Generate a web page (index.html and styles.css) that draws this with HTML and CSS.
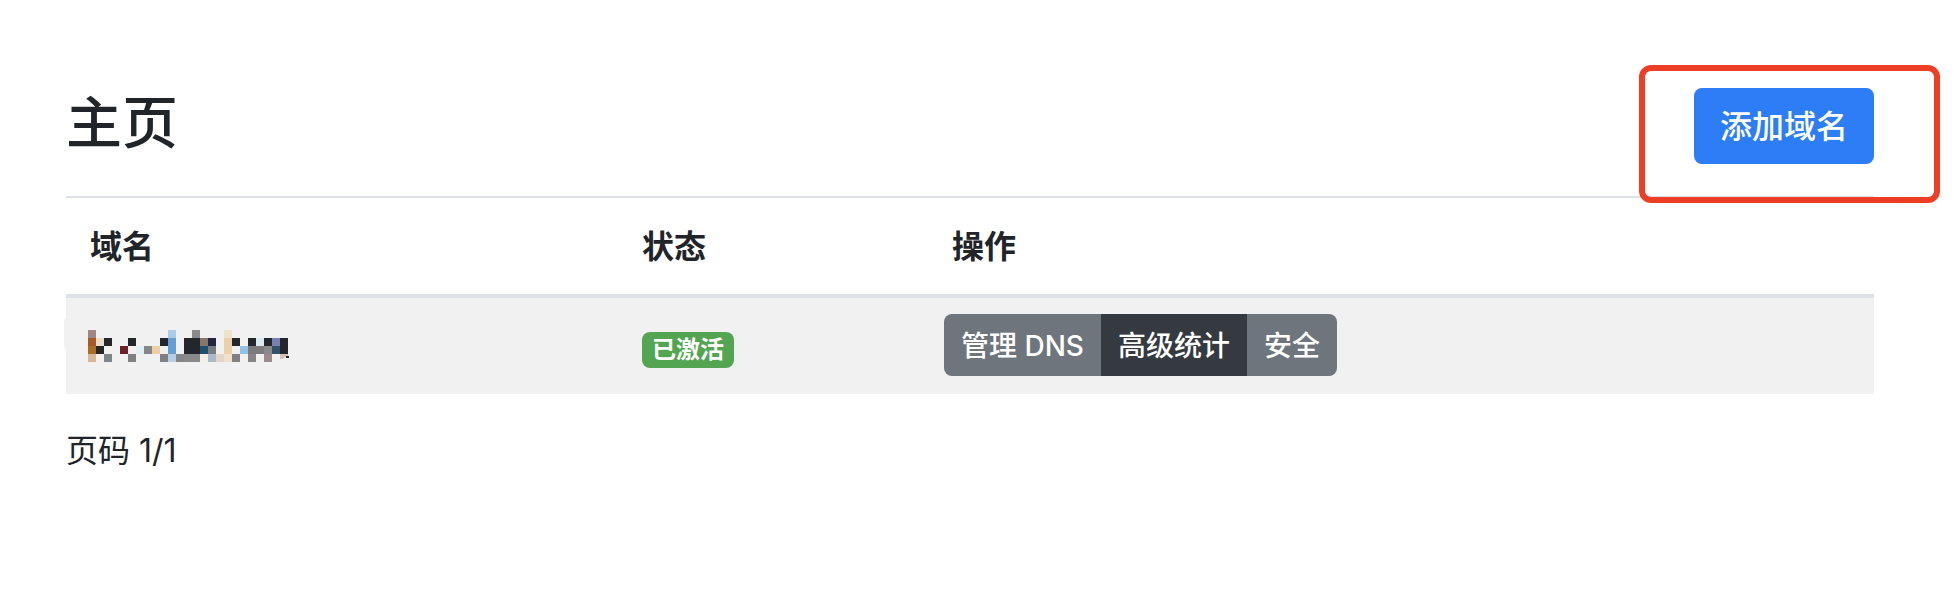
FILE: index.html
```html
<!DOCTYPE html>
<html lang="zh-CN">
<head>
<meta charset="utf-8">
<title>主页</title>
<meta name="viewport" content="width=device-width, initial-scale=1">
<link rel="stylesheet" href="styles.css">
</head>
<body>
<main class="page">
  <header class="page-header">
    <h1 class="title">主页</h1>
    <div class="highlight"><button type="button" class="btn btn-primary">添加域名</button></div>
  </header>
  <table class="domains">
    <thead>
      <tr><th scope="col" class="col-name">域名</th><th scope="col" class="col-status">状态</th><th scope="col">操作</th></tr>
    </thead>
    <tbody>
      <tr>
        <td class="name">
          <svg class="mosaic" viewBox="0 0 25 4" width="200" height="32" shape-rendering="crispEdges" role="img" aria-label="域名已隐藏">
            <g fill="#23272b">
              <path d="M2 1h1v1h-1zM5 1h1v1h-1zM9 1h1v1h-1zM12 1h2v2h-2zM18 1h1v1h-1zM20 1h1v1h-1zM22 1h1v1h-1zM24 1h1v2h-1zM1 2h1v1h-1z"/>
            </g>
            <path fill="#9f8583" d="M0 0h1v1h-1z"/>
            <path fill="#abcce6" d="M10 0h1v1h-1z"/>
            <path fill="#8a8a8a" d="M13 0h1v1h-1zM22 2h1v1h-1zM12 3h2v1h-2z"/>
            <path fill="#f0e1cd" d="M17 0h1v1h-1zM17 3h1v1h-1z"/>
            <path fill="#a65a28" d="M0 1h1v1h-1z"/>
            <path fill="#e8dccd" d="M1 1h1v1h-1z"/>
            <path fill="#639fd4" d="M10 1h1v2h-1z"/>
            <path fill="#867868" d="M14 1h1v1h-1z"/>
            <path fill="#242444" d="M15 1h1v1h-1z"/>
            <path fill="#ecd0a6" d="M17 1h1v2h-1zM8 2h1v1h-1z"/>
            <path fill="#d9eaf2" d="M21 1h1v1h-1z"/>
            <path fill="#7880b4" d="M23 1h1v1h-1z"/>
            <path fill="#ab6c26" d="M0 2h1v1h-1z"/>
            <path fill="#6c2227" d="M4 2h1v1h-1z"/>
            <path fill="#e0f0f2" d="M6 2h1v1h-1z"/>
            <path fill="#868688" d="M7 2h1v1h-1zM11 3h1v1h-1zM20 3h1v1h-1z"/>
            <path fill="#1f4e6e" d="M14 2h1v1h-1z"/>
            <path fill="#7b7b7d" d="M15 2h1v1h-1zM20 2h2v1h-2z"/>
            <path fill="#92c3e6" d="M19 2h1v1h-1z"/>
            <path fill="#34516a" d="M23 2h1v1h-1z"/>
            <path fill="#d8b89c" d="M0 3h1v1h-1z"/>
            <path fill="#7e868b" d="M2 3h1v1h-1z"/>
            <path fill="#808083" d="M5 3h1v1h-1zM9 3h1v1h-1zM18 3h1v1h-1z"/>
            <path fill="#b6cfe4" d="M10 3h1v1h-1z"/>
            <path fill="#f2efe8" d="M14 3h1v1h-1z"/>
            <path fill="#abb9cc" d="M15 3h1v1h-1z"/>
            <path fill="#e3d5c4" d="M16 3h1v1h-1z"/>
            <path fill="#9c8a8c" d="M22 3h1v1h-1z"/>
            <path fill="#d3c3bb" d="M24 3h1v.3l-1 .4z"/>
            <path fill="#23272b" d="M24.7 3.25h.4v.2h-.4z"/>
          </svg>
        </td>
        <td><span class="badge">已激活</span></td>
        <td class="actions">
          <div class="btn-group" role="group" aria-label="操作">
            <button type="button" class="btn btn-sm">管理 DNS</button>
            <button type="button" class="btn btn-sm btn-dark">高级统计</button>
            <button type="button" class="btn btn-sm">安全</button>
          </div>
        </td>
      </tr>
    </tbody>
  </table>
  <p class="pager">页码 1/1</p>
</main>
</body>
</html>
```
FILE: styles.css
```css
* { box-sizing: border-box; }

body {
  margin: 0;
  background: #fff;
  color: #212529;
  font: 32px/48px Inter, "Noto Sans CJK SC", sans-serif;
}

.page { padding: 88px 80px 0 66px; }

.page-header {
  display: flex;
  justify-content: space-between;
  align-items: flex-start;
  margin-bottom: 32px;
}

.title {
  margin: 0;
  font-size: 56px;
  line-height: 70px;
  font-weight: 500;
}

.highlight { position: relative; display: flex; }

.highlight::after {
  content: "";
  position: absolute;
  inset: -23px -66px -39px -55px;
  border: 6px solid #ed3f26;
  border-radius: 12px;
  pointer-events: none;
}

.btn {
  border: 0;
  margin: 0;
  color: #fff;
  font: inherit;
  font-weight: 500;
  white-space: nowrap;
  cursor: pointer;
}

.btn-primary {
  padding: 15px 26px 13px;
  background: #2d7df6;
  border-radius: 8px;
}

.domains {
  width: 100%;
  border-spacing: 0;
  table-layout: fixed;
}

.col-name { width: 552px; }
.col-status { width: 310px; }

.domains th {
  padding: 25px 24px 23px;
  border-top: 2px solid #dee2e6;
  border-bottom: 4px solid #dee2e6;
  font-weight: 700;
  text-align: left;
}

.domains td {
  padding: 16px 24px;
  background: #f1f1f1;
  vertical-align: middle;
}

.domains .name { position: relative; padding-left: 22px; }

.name::before {
  content: "";
  position: absolute;
  left: -2px;
  top: 20px;
  width: 8px;
  height: 32px;
  border-radius: 4px;
  background: #f1f1f1;
}

.mosaic { display: block; overflow: visible; }

.badge {
  display: block;
  width: max-content;
  margin-top: 8px;
  padding: 0 10px;
  border-radius: 8px;
  background: #53a551;
  color: #fff;
  font-size: 24px;
  line-height: 36px;
  font-weight: 700;
}

.domains .actions { padding: 16px; }

.btn-group {
  display: flex;
  width: max-content;
  margin-bottom: 2px;
  border-radius: 8px;
  overflow: hidden;
}

.btn-sm {
  padding: 11px 17px 9px;
  background: #6e757c;
  font-size: 28px;
  line-height: 42px;
}

.btn-dark { background: #353a40; }

.pager { margin: 33px 0 0; }
```
